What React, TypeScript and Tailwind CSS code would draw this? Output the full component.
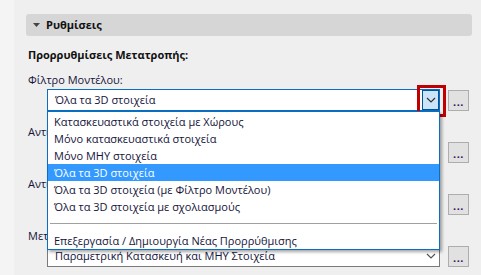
import React from 'react'

const font = { fontFamily: '"Open Sans", "Noto Sans", sans-serif' }

const options = [
  'Κατασκευαστικά στοιχεία με Χώρους',
  'Μόνο κατασκευαστικά στοιχεία',
  'Μόνο ΜΗΥ στοιχεία',
  'Όλα τα 3D στοιχεία',
  'Όλα τα 3D στοιχεία (με Φίλτρο Μοντέλου)',
  'Όλα τα 3D στοιχεία με σχολιασμούς',
]

function Chevron({ className }: { className?: string }) {
  return (
    <svg width="10" height="6" viewBox="0 0 10 6" className={className}>
      <path d="M1 1 L5 5 L9 1" fill="none" stroke="currentColor" strokeWidth="1.2" />
    </svg>
  )
}

function DotsButton() {
  return (
    <div className="w-[21px] h-[21px] bg-[#e1e1e1] border border-[#adadad] flex items-end justify-center pb-[3px] text-[11px] leading-none text-[#3a1060] font-bold tracking-[0.5px]">
      ...
    </div>
  )
}

function Field({ label, value, focused }: { label: string; value: string; focused?: boolean }) {
  return (
    <div className="flex flex-col mb-[13px]">
      {/* the open list covers the rest of the label, so clip it where the list starts */}
      <div
        className={
          focused
            ? 'h-[16px] pl-[2px] text-[11px] leading-[16px] text-[#14143a] whitespace-nowrap'
            : 'h-[16px] pl-[2px] w-[21px] overflow-hidden text-[11px] leading-[16px] text-[#14143a] whitespace-nowrap'
        }
      >
        {label}
      </div>
      <div className="flex items-center mt-[1px]">
        <div
          className={
            focused
              ? 'relative ml-[21px] w-[393px] h-[22px] bg-white border border-[#0a6fc2] flex items-center'
              : 'relative ml-[21px] w-[393px] h-[22px] bg-white border border-[#7a7a7a] flex items-center'
          }
        >
          <span className="pl-[7px] text-[11px] text-[#14143a] flex-1 whitespace-nowrap">{value}</span>
          {focused ? (
            <div className="w-[17px] h-[20px] bg-[#cce4f7] border border-[#005499] flex items-center justify-center text-[#333]">
              <Chevron />
            </div>
          ) : (
            <div className="w-[17px] h-[20px] flex items-center justify-center text-[#555]">
              <Chevron />
            </div>
          )}
          {focused && (
            <div className="absolute right-[-7px] top-[-5px] w-[29px] h-[32px] border-[3px] border-[#c00000]" />
          )}
        </div>
        <div className="ml-[8px]">
          <DotsButton />
        </div>
      </div>
    </div>
  )
}

export default function App() {
  return (
    <div className="relative flex w-[481px] h-[275px] overflow-hidden bg-[#efefef]" style={font}>
      <div className="w-[14px] shrink-0 bg-[#f4f4f4]" />
      <div className="flex-1 pt-[14px] pl-[12px] pr-[9px]">
        <div className="h-[22px] bg-[#d6d6d6] rounded-[3px] flex items-center pl-[7px]">
          <svg width="7" height="4" viewBox="0 0 7 4" className="mr-[6px]">
            <path d="M0 0 L7 0 L3.5 4 Z" fill="#444" />
          </svg>
          <span className="text-[11px] font-bold text-[#111]">Ρυθμίσεις</span>
        </div>
        <div className="mt-[11px] pl-[2px] h-[16px] text-[11px] leading-[16px] font-bold text-[#111] whitespace-nowrap">
          Προρρυθμίσεις Μετατροπής:
        </div>
        <div className="mt-[9px]">
          <Field label="Φίλτρο Μοντέλου:" value="Όλα τα 3D στοιχεία" focused />
          <Field label="Αντικατάσταση Τοίχων:" value="" />
          <Field label="Αντικατάσταση Πλακών:" value="" />
          <Field label="Μετατροπή σε:" value="Παραμετρική Κατασκευή και ΜΗΥ Στοιχεία" />
        </div>
      </div>

      <div className="absolute left-[47px] top-[111px] w-[393px] h-[139px] bg-white border border-[#0a6fc2] shadow-[2px_2px_3px_rgba(0,0,0,0.35)] pt-[1px] text-[11px] text-[#14143a]">
        {options.map((o, i) => (
          <div
            key={o}
            className={
              i === 3
                ? 'h-[17px] leading-[17px] pl-[6px] bg-[#3399ff] text-white'
                : 'h-[17px] leading-[17px] pl-[6px]'
            }
          >
            {o}
          </div>
        ))}
        <div className="h-[17px] flex items-center px-[2px]">
          <div className="w-full h-px bg-[#a0a0a0]" />
        </div>
        <div className="h-[17px] leading-[17px] pl-[6px]">Επεξεργασία / Δημιουργία Νέας Προρρύθμισης</div>
      </div>
    </div>
  )
}
